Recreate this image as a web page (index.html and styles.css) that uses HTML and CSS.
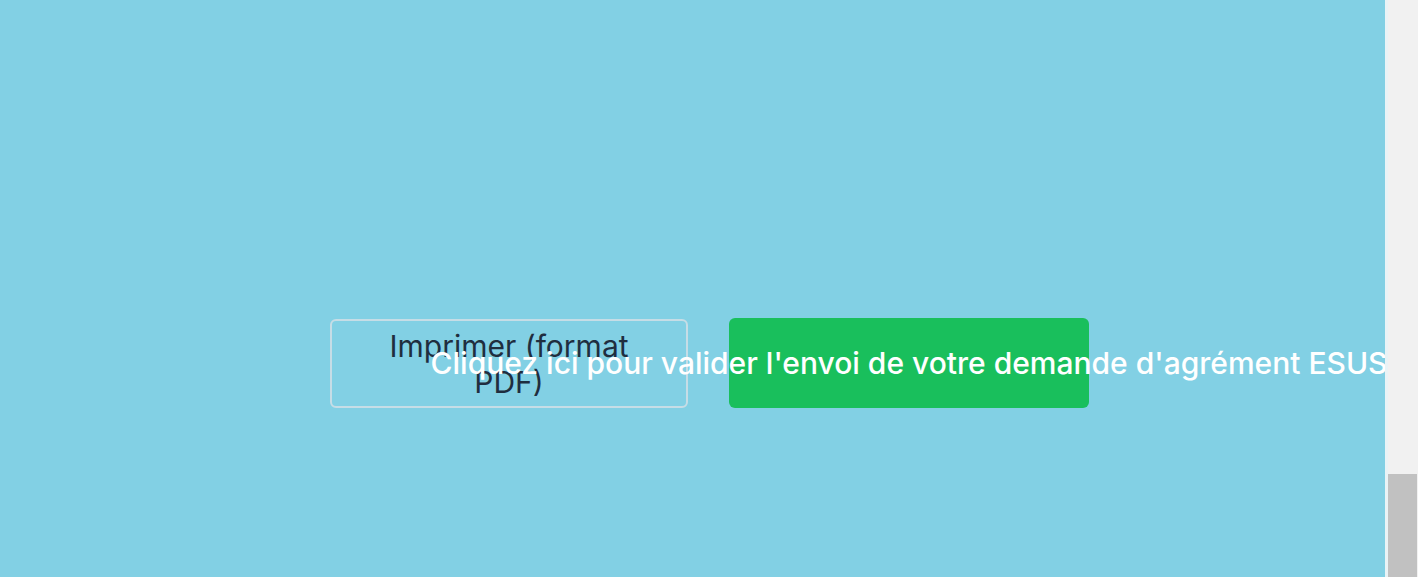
FILE: index.html
```html
<!DOCTYPE html>
<html lang="fr">
<head>
<meta charset="utf-8">
<title>Validation</title>
<link rel="stylesheet" href="styles.css">
</head>
<body>
<div class="page">
  <main class="main">
    <div class="actions">
      <button class="btn btn-print">Imprimer (format PDF)</button>
      <button class="btn btn-submit">Cliquez ici pour valider l'envoi de votre demande d'agrément ESUS</button>
    </div>
  </main>
  <div class="scrollbar">
    <div class="scroll-edge"></div>
    <div class="scroll-track">
      <div class="scroll-space"></div>
      <div class="scroll-thumb"></div>
    </div>
  </div>
</div>
</body>
</html>
```

FILE: styles.css
```css
html, body {
  margin: 0;
  padding: 0;
  height: 100%;
  overflow: hidden;
}
body {
  font-family: Inter, "Noto Sans", sans-serif;
}
.page {
  display: flex;
  width: 1418px;
  height: 577px;
}
.main {
  flex: 0 0 1385px;
  background: #82d0e4;
  padding-top: 318px;
  box-sizing: border-box;
}
.actions {
  display: flex;
  gap: 41px;
  padding-left: 330px;
}
.btn {
  font-family: Inter, "Noto Sans", sans-serif;
  font-size: 30px;
  line-height: 36px;
  border-radius: 6px;
  box-sizing: border-box;
  white-space: normal;
  cursor: pointer;
}
.btn-print {
  width: 358px;
  height: 89px;
  margin-top: 1px;
  background: transparent;
  border: 2px solid #c6dde6;
  color: #1f2e3f;
  padding: 0 40px;
  margin-top: 1px;
}
.btn-submit {
  width: 360px;
  height: 90px;
  background: #19bf5c;
  border: none;
  color: #ffffff;
  font-weight: 500;
  white-space: nowrap;
  display: flex;
  justify-content: center;
  align-items: center;
  padding: 0;
}
.scrollbar {
  flex: 0 0 33px;
  display: flex;
  background: #f1f1f1;
}
.scroll-edge {
  width: 3px;
  background: #e9f3f6;
}
.scroll-track {
  flex: 1;
  display: flex;
  flex-direction: column;
}
.scroll-space {
  height: 474px;
}
.scroll-thumb {
  flex: 1;
  background: #c1c1c1;
  margin-right: 1px;
}
```
